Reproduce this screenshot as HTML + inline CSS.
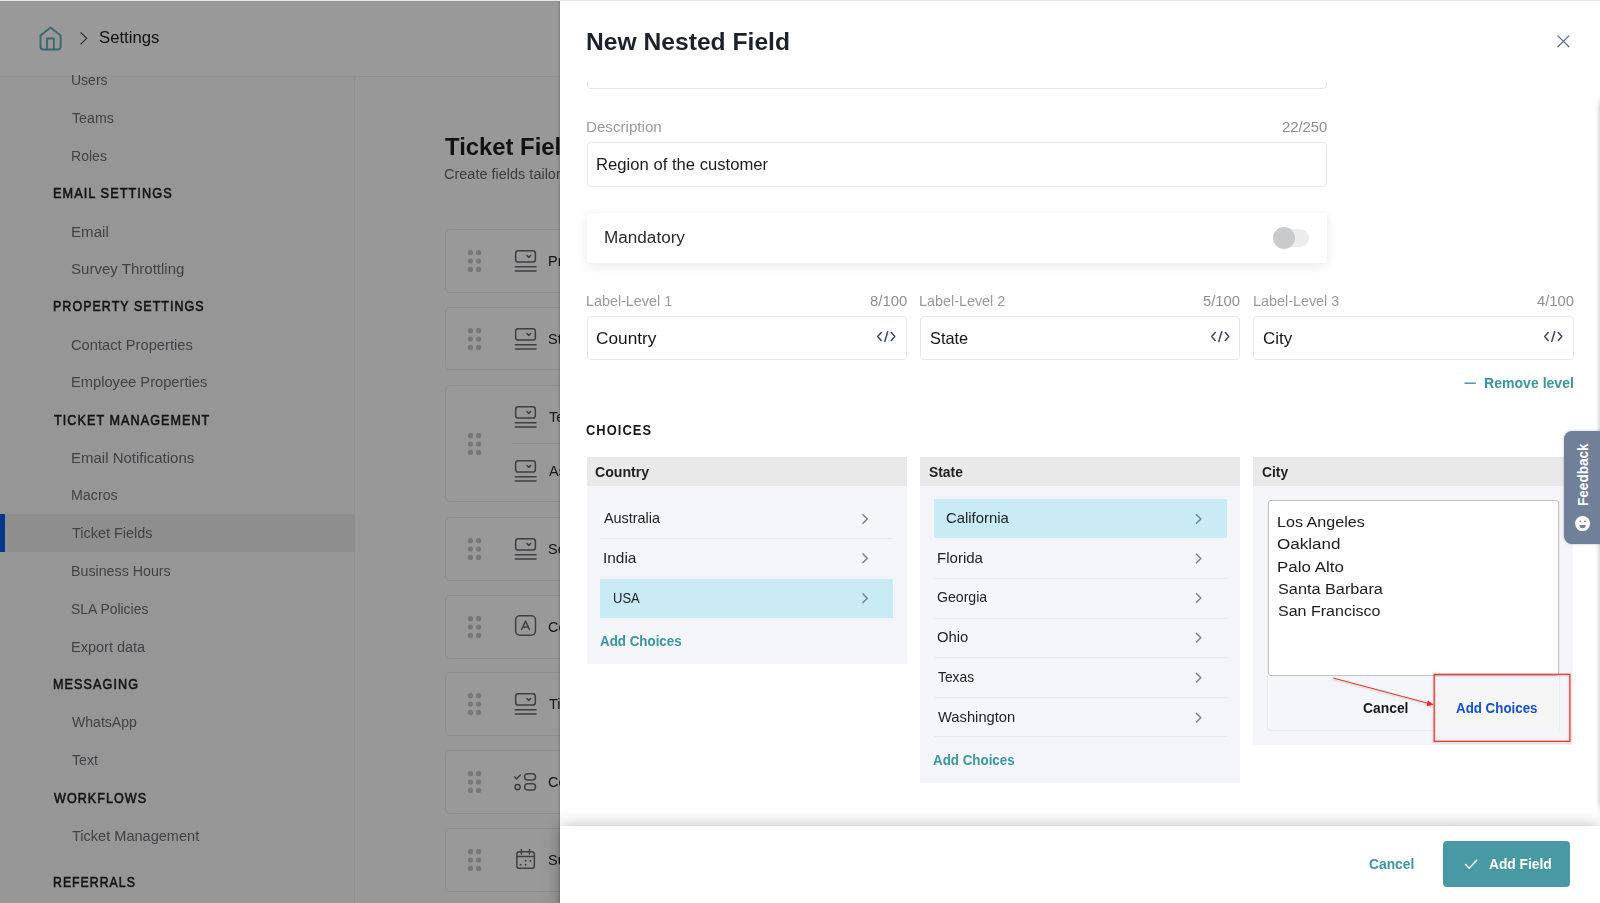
<!DOCTYPE html>
<html lang="en"><head><meta charset="utf-8"><title>New Nested Field</title>
<style>
*{box-sizing:border-box;margin:0;padding:0}
html,body{width:1600px;height:903px;overflow:hidden;background:#fff}
body{position:relative;font-family:"Liberation Sans",sans-serif}
.abs,.ic,.t{position:absolute}
.ic{overflow:visible;display:block}
.t{white-space:pre;transform-origin:0 0;display:block;font-weight:400;background:none;border:0;font-family:inherit;text-decoration:none}
#page{position:absolute;left:0;top:0;width:1600px;height:903px;background:#fefefe;overflow:hidden}
.topbar{background:#fff;border-bottom:1px solid #efefef}
.sidebar{background:#fafafa;border-right:1px solid #eee}
.card{background:#fff;border:1px solid #ececec;border-radius:5px}
.overlay{position:absolute;left:0;top:0;width:1600px;height:903px;background:rgba(0,0,0,.4)}
.drawer{position:absolute;left:560px;top:0;width:1040px;height:903px;background:#fff;box-shadow:-1px 0 2px rgba(0,0,0,.18)}
.layer{position:absolute;left:0;top:0;width:0;height:0}
.scroll{position:absolute;left:0;top:81px;width:1600px;height:745px;overflow:hidden}
.scroll>.inner{position:absolute;left:0;top:-81px;width:0;height:0}
.inp{border:1px solid #e8e8e8;border-radius:4px;background:#fff}
.mand{background:#fff;border-radius:3px;box-shadow:0 3px 12px rgba(0,0,0,.09),0 0 2px rgba(0,0,0,.04)}
.col{background:#f3f5f9}.colh{background:#e9e9e9}
.sel{background:#c9ebf5}.dv{background:#e9eaee}
.rshadow{background:linear-gradient(to right,rgba(0,0,0,0) 0%,rgba(0,0,0,.02) 30%,rgba(0,0,0,.07) 65%,rgba(0,0,0,.14) 100%);-webkit-mask-image:linear-gradient(to bottom,transparent 0,#000 12px,#000 calc(100% - 14px),transparent 100%);mask-image:linear-gradient(to bottom,transparent 0,#000 12px,#000 calc(100% - 14px),transparent 100%)}
.topline{position:absolute;left:0;top:0;width:1600px;height:1px;background:#e3e4e3}
</style></head>
<body>
<div id="page">
<header class="topbar abs" style="left:0;top:1px;width:1600px;height:76px"></header>
<svg class="ic" style="left:36px;top:22px;" width="30" height="32" viewBox="36 22 30 32" fill="none" stroke="#5fb1bb" stroke-width="1.95" stroke-linejoin="round" stroke-linecap="round"><path d="M50.5 27.6 L40.5 35.4 V46.7 a2.7 2.7 0 0 0 2.7 2.7 H57.9 a2.7 2.7 0 0 0 2.7 -2.7 V35.4 Z"/><path d="M47.1 49.4 V38.4 H53.9 V49.4"/></svg>
<svg class="ic" style="left:76px;top:28px;" width="16" height="21" viewBox="76 28 16 21" fill="none" stroke="#444" stroke-width="1.1"><path d="M80.5 32.4 L86.7 38.35 L80.5 44.3"/></svg>
<span class="t" style="left:99.24px;top:27.45px;font-size:16.75px;line-height:22px;transform:scaleX(0.9972);color:#222;">Settings</span>
<aside class="sidebar abs" style="left:0;top:77px;width:355px;height:826px"></aside>
<div class="abs" style="left:0px;top:514.25px;width:355px;height:37.75px;background:#ededed"></div>
<div class="abs" style="left:0px;top:514.25px;width:5px;height:37.75px;background:#075ae6"></div>
<nav>
<a class="t" style="left:70.92px;top:70.45px;font-size:15.5px;line-height:20px;transform:scaleX(0.9037);color:#6b6f75;">Users</a>
<a class="t" style="left:71.68px;top:108.45px;font-size:15.5px;line-height:20px;transform:scaleX(0.9162);color:#6b6f75;">Teams</a>
<a class="t" style="left:70.85px;top:145.95px;font-size:15.5px;line-height:20px;transform:scaleX(0.9059);color:#6b6f75;">Roles</a>
<h4 class="t" style="left:52.96px;top:184.45px;font-size:14.25px;line-height:19px;transform:scaleX(0.8915);color:#1f2226;letter-spacing:1.2px;-webkit-text-stroke:0.6px;">EMAIL SETTINGS</h4>
<a class="t" style="left:70.76px;top:221.70px;font-size:15.5px;line-height:20px;transform:scaleX(0.9737);color:#6b6f75;">Email</a>
<a class="t" style="left:71.32px;top:259.20px;font-size:15.5px;line-height:20px;transform:scaleX(0.9702);color:#6b6f75;">Survey Throttling</a>
<h4 class="t" style="left:52.98px;top:297.45px;font-size:14.25px;line-height:19px;transform:scaleX(0.8740);color:#1f2226;letter-spacing:1.2px;-webkit-text-stroke:0.6px;">PROPERTY SETTINGS</h4>
<a class="t" style="left:71.25px;top:334.70px;font-size:15.5px;line-height:20px;transform:scaleX(0.9486);color:#6b6f75;">Contact Properties</a>
<a class="t" style="left:70.80px;top:372.20px;font-size:15.5px;line-height:20px;transform:scaleX(0.9469);color:#6b6f75;">Employee Properties</a>
<h4 class="t" style="left:53.72px;top:411.20px;font-size:14.25px;line-height:19px;transform:scaleX(0.8840);color:#1f2226;letter-spacing:1.2px;-webkit-text-stroke:0.6px;">TICKET MANAGEMENT</h4>
<a class="t" style="left:70.77px;top:447.70px;font-size:15.5px;line-height:20px;transform:scaleX(0.9668);color:#6b6f75;">Email Notifications</a>
<a class="t" style="left:70.83px;top:485.45px;font-size:15.5px;line-height:20px;transform:scaleX(0.9184);color:#6b6f75;">Macros</a>
<a class="t" style="left:71.68px;top:523.45px;font-size:15.5px;line-height:20px;transform:scaleX(0.9326);color:#6b6f75;">Ticket Fields</a>
<a class="t" style="left:70.83px;top:561.20px;font-size:15.5px;line-height:20px;transform:scaleX(0.9183);color:#6b6f75;">Business Hours</a>
<a class="t" style="left:71.37px;top:598.95px;font-size:15.5px;line-height:20px;transform:scaleX(0.8980);color:#6b6f75;">SLA Policies</a>
<a class="t" style="left:70.81px;top:636.70px;font-size:15.5px;line-height:20px;transform:scaleX(0.9358);color:#6b6f75;">Export data</a>
<h4 class="t" style="left:52.96px;top:675.20px;font-size:14.25px;line-height:19px;transform:scaleX(0.8860);color:#1f2226;letter-spacing:1.2px;-webkit-text-stroke:0.6px;">MESSAGING</h4>
<a class="t" style="left:71.94px;top:712.20px;font-size:15.5px;line-height:20px;transform:scaleX(0.9075);color:#6b6f75;">WhatsApp</a>
<a class="t" style="left:71.68px;top:750.20px;font-size:15.5px;line-height:20px;transform:scaleX(0.9115);color:#6b6f75;">Text</a>
<h4 class="t" style="left:53.94px;top:788.70px;font-size:14.25px;line-height:19px;transform:scaleX(0.8807);color:#1f2226;letter-spacing:1.2px;-webkit-text-stroke:0.6px;">WORKFLOWS</h4>
<a class="t" style="left:71.67px;top:825.70px;font-size:15.5px;line-height:20px;transform:scaleX(0.9383);color:#6b6f75;">Ticket Management</a>
<h4 class="t" style="left:52.99px;top:873.20px;font-size:14.25px;line-height:19px;transform:scaleX(0.8601);color:#1f2226;letter-spacing:1.2px;-webkit-text-stroke:0.6px;">REFERRALS</h4>
</nav>
<main>
<h1 class="t" style="left:444.93px;top:131.00px;font-size:23.75px;line-height:31px;transform:scaleX(1.0036);color:#1b1e22;font-weight:700;">Ticket Fields</h1>
<p class="t" style="left:444.26px;top:165.45px;font-size:14.75px;line-height:19px;transform:scaleX(0.9822);color:#63676d;">Create fields tailored to your business needs and workflows.</p>
<div class="card abs" style="left:445.2px;top:229.1px;width:1114.8px;height:63.6px;"></div>
<div class="card abs" style="left:445.2px;top:306.9px;width:1114.8px;height:63.6px;"></div>
<div class="card abs" style="left:445.2px;top:384.8px;width:1114.8px;height:117.7px;"></div>
<div class="card abs" style="left:445.2px;top:517.3px;width:1114.8px;height:63.6px;"></div>
<div class="card abs" style="left:445.2px;top:595px;width:1114.8px;height:63.6px;"></div>
<div class="card abs" style="left:445.2px;top:672.4px;width:1114.8px;height:63.6px;"></div>
<div class="card abs" style="left:445.2px;top:750.4px;width:1114.8px;height:63.6px;"></div>
<div class="card abs" style="left:445.2px;top:828.4px;width:1114.8px;height:63.6px;"></div>
<div class="abs" style="left:512px;top:443px;width:1048px;height:1px;background:#ececec"></div>
<svg class="ic" style="left:466px;top:249px;" width="18" height="24" viewBox="466 249 18 24" fill="#c6c6c6"><circle cx="470.4" cy="252.65" r="2.6"/><circle cx="470.4" cy="261" r="2.6"/><circle cx="470.4" cy="269.4" r="2.6"/><circle cx="478.6" cy="252.65" r="2.6"/><circle cx="478.6" cy="261" r="2.6"/><circle cx="478.6" cy="269.4" r="2.6"/></svg>
<svg class="ic" style="left:466px;top:326.7px;" width="18" height="24" viewBox="466 326.7 18 24" fill="#c6c6c6"><circle cx="470.4" cy="330.35" r="2.6"/><circle cx="470.4" cy="338.7" r="2.6"/><circle cx="470.4" cy="347.1" r="2.6"/><circle cx="478.6" cy="330.35" r="2.6"/><circle cx="478.6" cy="338.7" r="2.6"/><circle cx="478.6" cy="347.1" r="2.6"/></svg>
<svg class="ic" style="left:466px;top:431.9px;" width="18" height="24" viewBox="466 431.9 18 24" fill="#c6c6c6"><circle cx="470.4" cy="435.55" r="2.6"/><circle cx="470.4" cy="443.9" r="2.6"/><circle cx="470.4" cy="452.3" r="2.6"/><circle cx="478.6" cy="435.55" r="2.6"/><circle cx="478.6" cy="443.9" r="2.6"/><circle cx="478.6" cy="452.3" r="2.6"/></svg>
<svg class="ic" style="left:466px;top:537.1px;" width="18" height="24" viewBox="466 537.1 18 24" fill="#c6c6c6"><circle cx="470.4" cy="540.75" r="2.6"/><circle cx="470.4" cy="549.1" r="2.6"/><circle cx="470.4" cy="557.5" r="2.6"/><circle cx="478.6" cy="540.75" r="2.6"/><circle cx="478.6" cy="549.1" r="2.6"/><circle cx="478.6" cy="557.5" r="2.6"/></svg>
<svg class="ic" style="left:466px;top:614.8px;" width="18" height="24" viewBox="466 614.8 18 24" fill="#c6c6c6"><circle cx="470.4" cy="618.45" r="2.6"/><circle cx="470.4" cy="626.8" r="2.6"/><circle cx="470.4" cy="635.2" r="2.6"/><circle cx="478.6" cy="618.45" r="2.6"/><circle cx="478.6" cy="626.8" r="2.6"/><circle cx="478.6" cy="635.2" r="2.6"/></svg>
<svg class="ic" style="left:466px;top:692.2px;" width="18" height="24" viewBox="466 692.2 18 24" fill="#c6c6c6"><circle cx="470.4" cy="695.85" r="2.6"/><circle cx="470.4" cy="704.2" r="2.6"/><circle cx="470.4" cy="712.6" r="2.6"/><circle cx="478.6" cy="695.85" r="2.6"/><circle cx="478.6" cy="704.2" r="2.6"/><circle cx="478.6" cy="712.6" r="2.6"/></svg>
<svg class="ic" style="left:466px;top:770.2px;" width="18" height="24" viewBox="466 770.2 18 24" fill="#c6c6c6"><circle cx="470.4" cy="773.85" r="2.6"/><circle cx="470.4" cy="782.2" r="2.6"/><circle cx="470.4" cy="790.6" r="2.6"/><circle cx="478.6" cy="773.85" r="2.6"/><circle cx="478.6" cy="782.2" r="2.6"/><circle cx="478.6" cy="790.6" r="2.6"/></svg>
<svg class="ic" style="left:466px;top:848.2px;" width="18" height="24" viewBox="466 848.2 18 24" fill="#c6c6c6"><circle cx="470.4" cy="851.85" r="2.6"/><circle cx="470.4" cy="860.2" r="2.6"/><circle cx="470.4" cy="868.6" r="2.6"/><circle cx="478.6" cy="851.85" r="2.6"/><circle cx="478.6" cy="860.2" r="2.6"/><circle cx="478.6" cy="868.6" r="2.6"/></svg>
<svg class="ic" style="left:513px;top:248px;" width="26" height="26" viewBox="513 248 26 26" fill="none" stroke="#686a6e" stroke-width="1.5" stroke-linecap="round" stroke-linejoin="round"><rect x="515.65" y="250.85" width="19.7" height="11.2" rx="2.6"/><path d="M526.9 255.5 l1.9 1.9 l1.9 -1.9"/><path d="M515.3 266.8 H536 M515.3 271 H536"/></svg>
<svg class="ic" style="left:513px;top:325.7px;" width="26" height="26" viewBox="513 325.7 26 26" fill="none" stroke="#686a6e" stroke-width="1.5" stroke-linecap="round" stroke-linejoin="round"><rect x="515.65" y="328.55" width="19.7" height="11.2" rx="2.6"/><path d="M526.9 333.2 l1.9 1.9 l1.9 -1.9"/><path d="M515.3 344.5 H536 M515.3 348.7 H536"/></svg>
<svg class="ic" style="left:513px;top:403.6px;" width="26" height="26" viewBox="513 403.6 26 26" fill="none" stroke="#686a6e" stroke-width="1.5" stroke-linecap="round" stroke-linejoin="round"><rect x="515.65" y="406.45" width="19.7" height="11.2" rx="2.6"/><path d="M526.9 411.1 l1.9 1.9 l1.9 -1.9"/><path d="M515.3 422.4 H536 M515.3 426.6 H536"/></svg>
<svg class="ic" style="left:513px;top:458.3px;" width="26" height="26" viewBox="513 458.3 26 26" fill="none" stroke="#686a6e" stroke-width="1.5" stroke-linecap="round" stroke-linejoin="round"><rect x="515.65" y="461.15" width="19.7" height="11.2" rx="2.6"/><path d="M526.9 465.8 l1.9 1.9 l1.9 -1.9"/><path d="M515.3 477.1 H536 M515.3 481.3 H536"/></svg>
<svg class="ic" style="left:513px;top:536.1px;" width="26" height="26" viewBox="513 536.1 26 26" fill="none" stroke="#686a6e" stroke-width="1.5" stroke-linecap="round" stroke-linejoin="round"><rect x="515.65" y="538.95" width="19.7" height="11.2" rx="2.6"/><path d="M526.9 543.6 l1.9 1.9 l1.9 -1.9"/><path d="M515.3 554.9 H536 M515.3 559.1 H536"/></svg>
<svg class="ic" style="left:513px;top:691.2px;" width="26" height="26" viewBox="513 691.2 26 26" fill="none" stroke="#686a6e" stroke-width="1.5" stroke-linecap="round" stroke-linejoin="round"><rect x="515.65" y="694.05" width="19.7" height="11.2" rx="2.6"/><path d="M526.9 698.7 l1.9 1.9 l1.9 -1.9"/><path d="M515.3 710 H536 M515.3 714.2 H536"/></svg>
<svg class="ic" style="left:513px;top:613.3px;" width="26" height="26" viewBox="513 613.3 26 26" fill="none" stroke="#686a6e" stroke-width="1.5" stroke-linecap="round" stroke-linejoin="round"><rect x="515.65" y="616.15" width="19.8" height="19.3" rx="4.2"/><path d="M521.6 629.75 L525.55 621.45 L529.5 629.75 M522.8 627.35 H528.3"/></svg>
<svg class="ic" style="left:512px;top:769px;" width="27" height="26" viewBox="512 769 27 26" fill="none" stroke="#686a6e" stroke-width="1.5" stroke-linecap="round" stroke-linejoin="round"><path d="M514.7 777 l1.9 1.9 l3.7 -3.8"/><circle cx="517.6" cy="787" r="2.6"/><rect x="524.65" y="773.75" width="10.8" height="6.2" rx="3"/><rect x="524.65" y="783.75" width="10.8" height="6.3" rx="3"/></svg>
<svg class="ic" style="left:513px;top:847.2px;" width="26" height="26" viewBox="513 847.2 26 26" fill="none" stroke="#686a6e" stroke-width="1.5" stroke-linecap="round" stroke-linejoin="round"><rect x="516.85" y="852.05" width="17.5" height="16.4" rx="2.6"/><path d="M521.4 849.6 v4.6 M529.5 849.6 v4.6 M516.85 856.8 h17.5"/><circle cx="525.6" cy="860.9" r="0.95" fill="#686a6e" stroke="none"/><circle cx="530.5" cy="860.9" r="0.95" fill="#686a6e" stroke="none"/><circle cx="520.6" cy="864.9" r="0.95" fill="#686a6e" stroke="none"/><circle cx="525.6" cy="864.9" r="0.95" fill="#686a6e" stroke="none"/></svg>
<span class="t" style="left:547.81px;top:252.10px;font-size:14.75px;line-height:19px;transform:scaleX(0.9800);color:#25272a;">Priority</span>
<span class="t" style="left:548.34px;top:329.90px;font-size:14.75px;line-height:19px;transform:scaleX(0.9800);color:#25272a;">Status</span>
<span class="t" style="left:548.68px;top:407.50px;font-size:14.75px;line-height:19px;transform:scaleX(0.9800);color:#25272a;">Team</span>
<span class="t" style="left:548.97px;top:462.30px;font-size:14.75px;line-height:19px;transform:scaleX(0.9800);color:#25272a;">Assignee</span>
<span class="t" style="left:548.34px;top:540.00px;font-size:14.75px;line-height:19px;transform:scaleX(0.9800);color:#25272a;">Source</span>
<span class="t" style="left:548.27px;top:617.60px;font-size:14.75px;line-height:19px;transform:scaleX(0.9800);color:#25272a;">Contact</span>
<span class="t" style="left:548.68px;top:695.30px;font-size:14.75px;line-height:19px;transform:scaleX(0.9800);color:#25272a;">Title</span>
<span class="t" style="left:548.27px;top:773.00px;font-size:14.75px;line-height:19px;transform:scaleX(0.9800);color:#25272a;">Comments</span>
<span class="t" style="left:548.34px;top:850.70px;font-size:14.75px;line-height:19px;transform:scaleX(0.9800);color:#25272a;">Submitted on</span>
</main>
</div>
<div class="overlay"></div>
<section class="drawer"></section>
<div class="layer">
<h2 class="t" style="left:585.85px;top:25.70px;font-size:23.75px;line-height:31px;transform:scaleX(1.0375);color:#1b222a;font-weight:700;">New Nested Field</h2>
<svg class="ic" style="left:1554px;top:32px;" width="19" height="19" viewBox="1554 32 19 19" fill="none" stroke="#5e6e88" stroke-width="1.3" stroke-linecap="round"><path d="M1557.9 35.9 L1568.9 46.7 M1568.9 35.9 L1557.9 46.7"/></svg>
<div class="scroll"><div class="inner">
<div class="inp abs" style="left:586.7px;top:44.5px;width:740.3px;height:44.3px;"></div>
<label class="t" style="left:585.76px;top:117.70px;font-size:14.25px;line-height:19px;transform:scaleX(1.0623);color:#9a9a9a;">Description</label>
<span class="t" style="left:1281.75px;top:117.70px;font-size:14.0px;line-height:18px;transform:scaleX(1.0583);color:#8e8e8e;">22/250</span>
<div class="inp abs" style="left:586.7px;top:142px;width:740.3px;height:44.8px;"></div>
<span class="t" style="left:596.13px;top:155.20px;font-size:15.75px;line-height:20px;transform:scaleX(1.0571);color:#1c1c1c;">Region of the customer</span>
<div class="mand abs" style="left:586.75px;top:213px;width:739.75px;height:49.5px;"></div>
<span class="t" style="left:603.59px;top:227.45px;font-size:16.0px;line-height:21px;transform:scaleX(1.0707);color:#2b2b2b;">Mandatory</span>
<div class="abs" style="left:1274px;top:229.4px;width:35px;height:17.6px;background:#ececec;border-radius:9px"></div>
<div class="abs" style="left:1273.1px;top:226.9px;width:22.3px;height:22.3px;background:#c9cacc;border-radius:50%"></div>
<label class="t" style="left:585.82px;top:291.95px;font-size:14.5px;line-height:19px;transform:scaleX(0.9891);color:#9a9a9a;">Label-Level 1</label>
<span class="t" style="left:869.85px;top:291.95px;font-size:14.0px;line-height:18px;transform:scaleX(1.0622);color:#8e8e8e;">8/100</span>
<div class="inp abs" style="left:586.7px;top:315.8px;width:320.1px;height:44.7px;"></div>
<span class="t" style="left:596.12px;top:327.95px;font-size:16.5px;line-height:21px;transform:scaleX(1.0455);color:#151515;">Country</span>
<svg class="ic" style="left:875.4px;top:329px;" width="23" height="15" viewBox="875.4 329 23 15" fill="none" stroke="#3f4a5c" stroke-width="1.55" stroke-linecap="round" stroke-linejoin="round"><path d="M881.6 332.5 L878.1 336.5 L881.6 340.5 M888.1 331.7 L885.2 341.4 M891.7 332.5 L895.2 336.5 L891.7 340.5"/></svg>
<label class="t" style="left:919.32px;top:291.95px;font-size:14.5px;line-height:19px;transform:scaleX(0.9911);color:#9a9a9a;">Label-Level 2</label>
<span class="t" style="left:1203.11px;top:291.95px;font-size:14.0px;line-height:18px;transform:scaleX(1.0578);color:#8e8e8e;">5/100</span>
<div class="inp abs" style="left:919.7px;top:315.8px;width:320.5px;height:44.7px;"></div>
<span class="t" style="left:929.96px;top:327.95px;font-size:16.5px;line-height:21px;transform:scaleX(0.9906);color:#151515;">State</span>
<svg class="ic" style="left:1208.8px;top:329px;" width="23" height="15" viewBox="1208.8 329 23 15" fill="none" stroke="#3f4a5c" stroke-width="1.55" stroke-linecap="round" stroke-linejoin="round"><path d="M1215 332.5 L1211.5 336.5 L1215 340.5 M1221.5 331.7 L1218.6 341.4 M1225.1 332.5 L1228.6 336.5 L1225.1 340.5"/></svg>
<label class="t" style="left:1252.57px;top:291.95px;font-size:14.5px;line-height:19px;transform:scaleX(0.9912);color:#9a9a9a;">Label-Level 3</label>
<span class="t" style="left:1536.66px;top:291.95px;font-size:14.0px;line-height:18px;transform:scaleX(1.0533);color:#8e8e8e;">4/100</span>
<div class="inp abs" style="left:1253px;top:315.8px;width:320.5px;height:44.7px;"></div>
<span class="t" style="left:1262.89px;top:327.95px;font-size:16.5px;line-height:21px;transform:scaleX(1.0253);color:#151515;">City</span>
<svg class="ic" style="left:1542.1px;top:329px;" width="23" height="15" viewBox="1542.1 329 23 15" fill="none" stroke="#3f4a5c" stroke-width="1.55" stroke-linecap="round" stroke-linejoin="round"><path d="M1548.3 332.5 L1544.8 336.5 L1548.3 340.5 M1554.8 331.7 L1551.9 341.4 M1558.4 332.5 L1561.9 336.5 L1558.4 340.5"/></svg>
<svg class="ic" style="left:1462px;top:380px;" width="16" height="6" viewBox="1462 380 16 6" stroke="#3a96a1" stroke-width="1.4" fill="none"><path d="M1464.5 383.2 H1475.8"/></svg>
<a class="t" style="left:1484.06px;top:372.95px;font-size:15.25px;line-height:20px;transform:scaleX(0.9224);color:#3a96a1;font-weight:700;">Remove level</a>
<h3 class="t" style="left:586.47px;top:419.70px;font-size:15.0px;line-height:20px;transform:scaleX(0.8608);color:#1a1a1a;font-weight:700;letter-spacing:1.2px;">CHOICES</h3>
<div class="col abs" style="left:586.75px;top:457px;width:319.75px;height:206.75px;"></div>
<div class="colh abs" style="left:586.75px;top:457px;width:319.75px;height:28.75px;"></div>
<span class="t" style="left:595.17px;top:462.70px;font-size:14.5px;line-height:19px;transform:scaleX(0.9741);color:#1f1f1f;font-weight:700;">Country</span>
<div class="col abs" style="left:920px;top:457px;width:319.75px;height:326px;"></div>
<div class="colh abs" style="left:920px;top:457px;width:319.75px;height:28.75px;"></div>
<span class="t" style="left:929.10px;top:462.70px;font-size:14.5px;line-height:19px;transform:scaleX(0.9550);color:#1f1f1f;font-weight:700;">State</span>
<div class="col abs" style="left:1253.25px;top:457px;width:319.75px;height:287.7px;"></div>
<div class="colh abs" style="left:1253.25px;top:457px;width:319.75px;height:28.75px;"></div>
<span class="t" style="left:1261.93px;top:462.70px;font-size:14.5px;line-height:19px;transform:scaleX(0.9539);color:#1f1f1f;font-weight:700;">City</span>
<div class="sel abs" style="left:600px;top:578.75px;width:293px;height:38.75px;"></div>
<div class="dv abs" style="left:600px;top:537.8px;width:293px;height:1px;"></div>
<span class="t" style="left:604.47px;top:509.45px;font-size:14.5px;line-height:19px;transform:scaleX(0.9930);color:#222325;">Australia</span>
<span class="t" style="left:603.08px;top:548.70px;font-size:14.5px;line-height:19px;transform:scaleX(1.0626);color:#222325;">India</span>
<span class="t" style="left:612.75px;top:588.70px;font-size:14.5px;line-height:19px;transform:scaleX(0.8978);color:#222325;">USA</span>
<a class="t" style="left:599.67px;top:631.45px;font-size:15.25px;line-height:20px;transform:scaleX(0.8757);color:#3a96a1;font-weight:700;">Add Choices</a>
<svg class="ic" style="left:858px;top:500px;" width="14" height="120" viewBox="858 500 14 120" fill="none" stroke="#6f7d99" stroke-width="1.4"><path d="M862.5 514.25 L867.3 519 L862.5 523.75"/><path d="M862.5 553.55 L867.3 558.3 L862.5 563.05"/><path d="M862.5 593.5 L867.3 598.25 L862.5 603"/></svg>
<div class="sel abs" style="left:933.5px;top:499.25px;width:293px;height:38.25px;"></div>
<div class="dv abs" style="left:933.5px;top:577.75px;width:293px;height:1px;"></div>
<div class="dv abs" style="left:933.5px;top:617.75px;width:293px;height:1px;"></div>
<div class="dv abs" style="left:933.5px;top:657px;width:293px;height:1px;"></div>
<div class="dv abs" style="left:933.5px;top:697px;width:293px;height:1px;"></div>
<div class="dv abs" style="left:933.5px;top:736.25px;width:293px;height:1px;"></div>
<span class="t" style="left:946.25px;top:509.45px;font-size:14.5px;line-height:19px;transform:scaleX(1.0246);color:#222325;">California</span>
<span class="t" style="left:936.77px;top:548.70px;font-size:14.5px;line-height:19px;transform:scaleX(1.0374);color:#222325;">Florida</span>
<span class="t" style="left:937.29px;top:588.45px;font-size:14.5px;line-height:19px;transform:scaleX(0.9732);color:#222325;">Georgia</span>
<span class="t" style="left:937.30px;top:628.20px;font-size:14.5px;line-height:19px;transform:scaleX(1.0223);color:#222325;">Ohio</span>
<span class="t" style="left:937.69px;top:668.20px;font-size:14.5px;line-height:19px;transform:scaleX(0.9516);color:#222325;">Texas</span>
<span class="t" style="left:937.94px;top:708.20px;font-size:14.5px;line-height:19px;transform:scaleX(1.0161);color:#222325;">Washington</span>
<a class="t" style="left:933.17px;top:750.20px;font-size:15.25px;line-height:20px;transform:scaleX(0.8757);color:#3a96a1;font-weight:700;">Add Choices</a>
<svg class="ic" style="left:1192px;top:500px;" width="14" height="240" viewBox="1192 500 14 240" fill="none" stroke="#6f7d99" stroke-width="1.4"><path d="M1196 514.25 L1200.8 519 L1196 523.75"/><path d="M1196 553.65 L1200.8 558.4 L1196 563.15"/><path d="M1196 593.35 L1200.8 598.1 L1196 602.85"/><path d="M1196 633 L1200.8 637.75 L1196 642.5"/><path d="M1196 673 L1200.8 677.75 L1196 682.5"/><path d="M1196 713 L1200.8 717.75 L1196 722.5"/></svg>
<div class="abs" style="left:1267.3px;top:499.6px;width:292.5px;height:231.9px;border:1px solid #ebecf0;border-radius:3px"></div>
<div class="abs" style="left:1434.6px;top:684.5px;width:124.7px;height:46.5px;background:#f5f5f6"></div>
<div class="abs" style="left:1267.6px;top:499.7px;width:291.8px;height:176.3px;border:1px solid #c3c3c3;border-radius:3px;background:#fff"></div>
<span class="t" style="left:1276.93px;top:512.00px;font-size:15.5px;line-height:20px;transform:scaleX(1.0401);color:#1c1c1c;">Los Angeles</span>
<span class="t" style="left:1277.44px;top:534.30px;font-size:15.5px;line-height:20px;transform:scaleX(1.0973);color:#1c1c1c;">Oakland</span>
<span class="t" style="left:1276.86px;top:556.60px;font-size:15.5px;line-height:20px;transform:scaleX(1.0925);color:#1c1c1c;">Palo Alto</span>
<span class="t" style="left:1277.51px;top:578.80px;font-size:15.5px;line-height:20px;transform:scaleX(1.0492);color:#1c1c1c;">Santa Barbara</span>
<span class="t" style="left:1277.52px;top:601.10px;font-size:15.5px;line-height:20px;transform:scaleX(1.0340);color:#1c1c1c;">San Francisco</span>
<button class="t" style="left:1362.53px;top:698.90px;font-size:14.75px;line-height:19px;transform:scaleX(0.9395);color:#1a1a1a;font-weight:700;">Cancel</button>
<button class="t" style="left:1455.67px;top:698.90px;font-size:14.75px;line-height:19px;transform:scaleX(0.9037);color:#1350d6;font-weight:700;">Add Choices</button>
<svg class="ic" style="left:1330px;top:670px;filter:drop-shadow(0 1px 1px rgba(0,0,0,.22))" width="244" height="76" viewBox="1330 670 244 76" ><rect x="1434.2" y="674.3" width="135.7" height="67" fill="none" stroke="#f8281c" stroke-width="1.2"/><path d="M1333.4 678.1 L1430 703.8" stroke="#f8281c" stroke-width="1" fill="none"/><path d="M1433.6 704.8 L1426.6 705.9 L1428 700.6 Z" fill="#f8281c"/></svg>
</div></div>
<div class="rshadow abs" style="left:1595.3px;top:95px;width:4.7px;height:720px;"></div>
<footer class="abs" style="left:560px;top:825.5px;width:1040px;height:89.5px;background:#fff;box-shadow:0 0 16px rgba(0,0,0,.28)"></footer>
<button class="t" style="left:1368.93px;top:854.90px;font-size:14.5px;line-height:19px;transform:scaleX(0.9534);color:#3a96a1;font-weight:700;">Cancel</button>
<div class="abs" style="left:1443.3px;top:840.9px;width:126.7px;height:46.3px;background:#4899a4;border-radius:4px"></div>
<svg class="ic" style="left:1462px;top:856px;" width="18" height="16" viewBox="1462 856 18 16" fill="none" stroke="#fff" stroke-width="1.5" stroke-linecap="round" stroke-linejoin="round"><path d="M1465.6 864.6 L1469.1 868.2 L1476.7 860.2"/></svg>
<span class="t" style="left:1488.66px;top:854.90px;font-size:14.5px;line-height:19px;transform:scaleX(0.9499);color:#fff;font-weight:700;">Add Field</span>
<div class="abs" style="left:1564px;top:430.9px;width:46px;height:112.8px;background:#718099;border-radius:8px 0 0 8px;box-shadow:0 0 3px rgba(0,0,0,.25)"></div>
<svg class="ic" style="left:1574px;top:515px;" width="18" height="18" viewBox="1574 515 18 18" ><circle cx="1582.6" cy="523.6" r="7.5" fill="#fff"/><circle cx="1580.4" cy="521.3" r="0.9" fill="#718099"/><circle cx="1584.9" cy="521.3" r="0.9" fill="#718099"/><path d="M1579.5 524.9 H1585.7 A3.1 3.3 0 0 1 1579.5 524.9 Z" fill="#718099"/></svg>
<span class="t" style="left:1574.00px;top:505.91px;font-size:14.5px;line-height:19px;transform:rotate(-90deg) scaleX(0.9356);color:#fff;font-weight:700;">Feedback</span>
</div>
<div class="topline"></div>
</body></html>
